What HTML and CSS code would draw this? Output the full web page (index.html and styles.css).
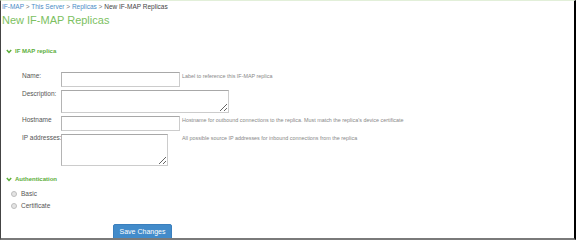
FILE: index.html
```html
<!DOCTYPE html>
<html lang="en">
<head>
    <meta charset="UTF-8">
    <title>New IF-MAP Replicas</title>
    <link rel="stylesheet" href="styles.css">
</head>
<body>
    <div class="page">
        <div class="breadcrumb">
            <a href="#">IF-MAP</a> &gt; <a href="#">This Server</a> &gt; <a href="#">Replicas</a> &gt; <span>New IF-MAP Replicas</span>
        </div>
        <h1 class="title">New IF-MAP Replicas</h1>

        <div class="section-head">
            <svg class="chevron" width="6" height="5" viewBox="0 0 6 5"><polyline points="0.8,1 3,3.4 5.2,1" fill="none" stroke="#5cae3a" stroke-width="1.5"/></svg>
            <span>IF MAP replica</span>
        </div>

        <form class="form-grid">
            <label for="name">Name:</label>
            <input type="text" id="name">
            <span class="help">Label to reference this IF-MAP replica</span>

            <label for="desc">Description:</label>
            <textarea id="desc" class="wide"></textarea>

            <label for="host">Hostname</label>
            <input type="text" id="host">
            <span class="help">Hostname for outbound connections to the replica. Must match the replica's device certificate</span>

            <label for="ips">IP addresses:</label>
            <textarea id="ips" class="tall"></textarea>
            <span class="help">All possible source IP addresses for inbound connections from the replica</span>
        </form>

        <div class="section-head auth">
            <svg class="chevron" width="6" height="5" viewBox="0 0 6 5"><polyline points="0.8,1 3,3.4 5.2,1" fill="none" stroke="#5cae3a" stroke-width="1.5"/></svg>
            <span>Authentication</span>
        </div>

        <div class="radios">
            <label class="radio"><span class="dot"></span>Basic</label>
            <label class="radio"><span class="dot"></span>Certificate</label>
        </div>

        <div class="actions">
            <button type="button" class="button">Save Changes</button>
        </div>
    </div>
</body>
</html>
```

FILE: styles.css
```css
* {
    box-sizing: border-box;
    margin: 0;
    padding: 0;
}
body {
    font-family: "Liberation Sans", Arial, sans-serif;
    background: #fff;
}
.page {
    width: 576px;
    height: 240px;
    overflow: hidden;
    border-top: 1px solid #e2efd9;
    border-left: 1px solid #444;
    border-right: 2px solid #000;
    border-bottom: 2px solid #7a7a7a;
    padding-left: 1px;
}
.breadcrumb {
    font-size: 6.5px;
    line-height: 10px;
    color: #777;
    margin-top: 1px;
}
.breadcrumb a {
    color: #4a8cc7;
    text-decoration: none;
}
.breadcrumb span {
    color: #444;
}
.title {
    font-size: 11px;
    font-weight: normal;
    line-height: 14px;
    color: #7cc15f;
    margin-top: 1px;
}
.section-head {
    display: flex;
    align-items: center;
    gap: 3px;
    margin-top: 19px;
    padding-left: 4px;
    font-size: 6px;
    font-weight: bold;
    line-height: 10px;
    color: #5cae3a;
}
.section-head.auth {
    margin-top: 8px;
}
.form-grid {
    display: grid;
    grid-template-columns: 39px 120px auto;
    row-gap: 3px;
    margin: 16px 0 0 20px;
    align-items: start;
}
.form-grid label {
    font-size: 6.5px;
    line-height: 8px;
    color: #555;
    padding-top: 0;
    white-space: nowrap;
}
.form-grid input,
.form-grid textarea {
    font-family: inherit;
    font-size: 7px;
    border: 1px solid #ccc;
    border-top-color: #a8a8a8;
    border-left-color: #b4b4b4;
    background: #fff;
}
.form-grid input {
    width: 119px;
    height: 15px;
}
.form-grid textarea {
    width: 107px;
    height: 32px;
}
.form-grid textarea.wide {
    grid-column: 2 / 4;
    width: 168px;
    height: 23px;
}
.help {
    font-size: 5.4px;
    line-height: 8px;
    color: #888;
    padding-left: 1px;
    white-space: nowrap;
}
.radios {
    display: flex;
    flex-direction: column;
    gap: 1.5px;
    margin: 5px 0 0 9px;
}
.radio {
    display: flex;
    align-items: center;
    gap: 4px;
    font-size: 6.5px;
    line-height: 10px;
    color: #555;
}
.dot {
    width: 6px;
    height: 6px;
    border-radius: 50%;
    border: 1px solid #bdbdbd;
    background: #e4e4e4;
}
.actions {
    margin: 9px 0 0 111px;
}
.button {
    display: inline-block;
    width: 59px;
    height: 16px;
    background: #428bca;
    color: #fff;
    font-family: inherit;
    font-size: 7px;
    line-height: 14px;
    border: 1px solid #3a7fbd;
    border-radius: 2px;
    cursor: pointer;
}
```
